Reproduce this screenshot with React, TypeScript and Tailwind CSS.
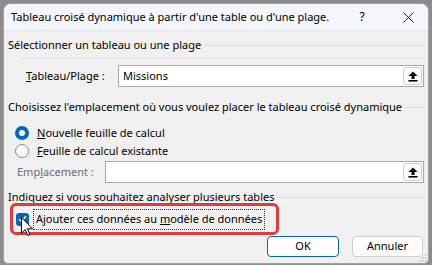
import React from "react";

const font = { fontFamily: '"Noto Sans", "Open Sans", sans-serif' };

function UploadIcon() {
  return (
    <svg width="10" height="11" viewBox="0 0 10 11">
      <path d="M5 0.5 L9.5 5 H6.5 V8 H3.5 V5 H0.5 Z" fill="#000" />
      <rect x="0.5" y="9" width="9" height="1.6" fill="#000" />
    </svg>
  );
}

function GroupHeader({ text, className = "h-[16px]" }: { text: string; className?: string }) {
  return (
    <div className={`flex items-center text-[11px] leading-[16px] text-black ${className}`}>
      <span className="whitespace-nowrap">{text}</span>
      <div className="flex-1 h-px bg-[#dadada] ml-[3px]" />
    </div>
  );
}

function Radio({ checked, children }: { checked?: boolean; children: React.ReactNode }) {
  return (
    <div className="flex items-center h-[18px] pl-[7px]">
      {checked ? (
        <div className="w-[14px] h-[14px] rounded-full bg-[#0067c0] flex items-center justify-center">
          <div className="w-[6px] h-[6px] rounded-full bg-white" />
        </div>
      ) : (
        <div className="w-[14px] h-[14px] rounded-full border border-[#8a8a8a] bg-[#f7f7f7]" />
      )}
      <span className="ml-[8px] text-[11px] text-black leading-[16px]">{children}</span>
    </div>
  );
}

function RefInput({ value, className }: { value?: string; className: string }) {
  return (
    <div className={`flex items-center bg-white border border-[#a9a9a9] ${className}`}>
      <span className="pl-[4px] flex-1 text-[11px] text-black">{value}</span>
      <div className="w-[19px] h-[18px] mr-[1px] rounded-[3px] border border-[#d0d0d0] bg-[#fbfbfb] flex items-center justify-center">
        <UploadIcon />
      </div>
    </div>
  );
}

export default function App() {
  return (
    <div className="w-[432px] h-[265px] bg-[#8c8c8c] pt-[3px] pl-[3px] overflow-hidden" style={font}>
      <div className="relative w-[426px] h-[261px] bg-[#f0f0f0] border border-[#a0a0a0] rounded-t-[8px] rounded-b-[5px] flex flex-col overflow-hidden">
        <div className="h-[27px] bg-[#f3f6fb] border-b border-[#e4e6ea] flex items-center pl-[7px] text-[11px] text-black">
          <span className="flex-1 whitespace-nowrap">Tableau croisé dynamique à partir d'une table ou d'une plage.</span>
          <span className="w-[12px] text-center text-[12px] mr-[35px]">?</span>
          <svg width="11" height="11" viewBox="0 0 11 11" className="mr-[14px]">
            <path d="M0.5 0.5 L10.5 10.5 M10.5 0.5 L0.5 10.5" stroke="#222" strokeWidth="1" />
          </svg>
        </div>

        <div className="flex flex-col px-[4px]">
          <div className="mt-[6px]">
            <GroupHeader text="Sélectionner un tableau ou une plage" />
          </div>
          <div className="h-px bg-[#e0e0e0] ml-[12px] mt-[5px]" />
          <div className="flex items-center mt-[6px]">
            <span className="w-[110px] pl-[18px] text-[11px] text-black whitespace-nowrap">
              <u>T</u>ableau/Plage :
            </span>
            <RefInput value="Missions" className="flex-1 h-[22px]" />
          </div>

          <div className="mt-[12px]">
            <GroupHeader text="Choisissez l'emplacement où vous voulez placer le tableau croisé dynamique" />
          </div>
          <div className="mt-[9px]">
            <Radio checked>
              <u>N</u>ouvelle feuille de calcul
            </Radio>
            <Radio>
              <u>F</u>euille de calcul existante
            </Radio>
          </div>
          <div className="flex items-center mt-[1px]">
            <span className="w-[97px] pl-[9px] text-[11px] text-[#6d6d6d] whitespace-nowrap">
              Emp<u>l</u>acement :
            </span>
            <RefInput className="flex-1 h-[22px]" />
          </div>

          <div className="mt-[8px]">
            <GroupHeader text="Indiquez si vous souhaitez analyser plusieurs tables" className="h-[12px]" />
          </div>

          <div className="ml-[2px] w-[269px] h-[32px] border-[3px] border-[#e0393e] rounded-[6px] flex items-center pl-[3px]">
            <div className="w-[13px] h-[13px] rounded-[3px] bg-[#0067c0] flex items-center justify-center">
              <svg width="9" height="8" viewBox="0 0 9 8">
                <path d="M1 4.2 L3.4 6.5 L8 1.2" stroke="#fff" strokeWidth="1.4" fill="none" />
              </svg>
            </div>
            <div className="ml-[4px] h-[21px] px-[2px] border border-dotted border-[#333] flex items-center text-[11px] text-black whitespace-nowrap">
              <span>
                Ajouter ces données au <u>m</u>odèle de données
              </span>
            </div>
          </div>

          <div className="flex justify-end gap-[13px] mt-[1px] pr-[1px]">
            <button className="w-[72px] h-[21px] rounded-[4px] border border-[#0067c0] bg-[#fdfdfd] text-[11px] text-black">
              OK
            </button>
            <button className="w-[71px] h-[21px] rounded-[4px] border border-[#cfcfcf] bg-[#fdfdfd] text-[11px] text-black">
              Annuler
            </button>
          </div>
        </div>

        <svg width="8" height="8" viewBox="0 0 8 8" className="absolute right-[1px] bottom-[1px]">
          <rect x="6" y="0" width="1.5" height="1.5" fill="#b8b8b8" />
          <rect x="3" y="3" width="1.5" height="1.5" fill="#b8b8b8" />
          <rect x="6" y="3" width="1.5" height="1.5" fill="#b8b8b8" />
          <rect x="0" y="6" width="1.5" height="1.5" fill="#b8b8b8" />
          <rect x="3" y="6" width="1.5" height="1.5" fill="#b8b8b8" />
          <rect x="6" y="6" width="1.5" height="1.5" fill="#b8b8b8" />
        </svg>

        <svg width="13" height="20" viewBox="0 0 13 20" className="absolute left-[17px] top-[213px]">
          <path d="M0.5 0.5 V16 L4.2 12.5 L6.8 18.5 L9 17.5 L6.5 11.8 H11.5 Z" fill="#fff" stroke="#000" strokeWidth="1" strokeLinejoin="round" />
        </svg>
      </div>
    </div>
  );
}
